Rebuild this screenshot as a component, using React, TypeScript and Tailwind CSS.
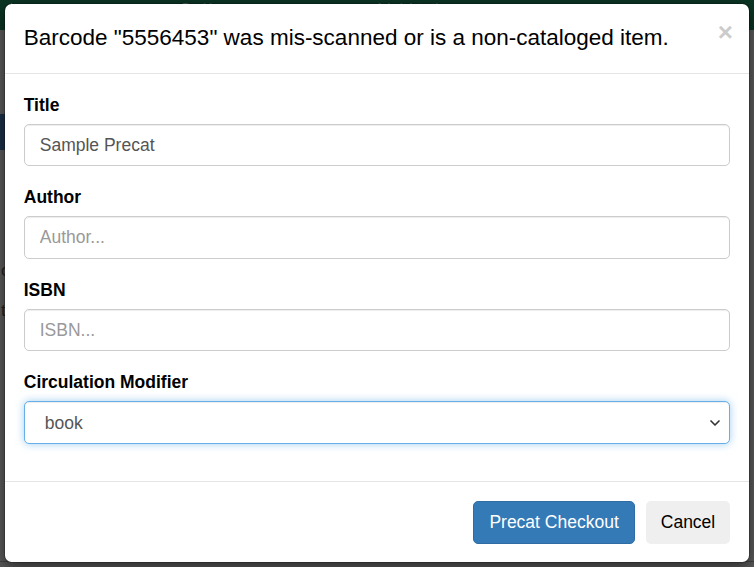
import React from "react";
import { ChevronDown } from "lucide-react";

const font = { fontFamily: '"Liberation Sans", Arial, sans-serif' };

function Field({
  label,
  placeholder,
  value,
}: {
  label: string;
  placeholder: string;
  value?: string;
}) {
  return (
    <div className="mb-[18.75px]">
      <label className="block mb-[6.25px] text-[17.5px] leading-[25px] font-bold text-black">
        {label}
      </label>
      <input
        className="block w-full h-[42.5px] px-[15px] py-[7.5px] text-[17.5px] text-[#555] bg-white border border-[#ccc] rounded-[5px] shadow-[inset_0_1px_1px_rgba(0,0,0,0.075)] outline-none placeholder:text-[#999]"
        placeholder={placeholder}
        defaultValue={value}
      />
    </div>
  );
}

export default function App() {
  return (
    <div className="relative h-[567px] w-[754px] overflow-hidden bg-[#5c5c5c]" style={font}>
      {/* page behind the backdrop */}
      <div className="h-[30px] bg-[#0b3524] flex items-start gap-[150px] px-[10px] pt-[1px] text-[12px] leading-[14px] text-[#55675e]">
        <span>ions</span>
        <span>Booking</span>
        <span>Administration</span>
      </div>
      <div className="h-[36px] w-[12px] mt-[84px] bg-[#1d3149]" />
      <div className="mt-[108px] text-[17px] text-[#222] pl-[1px]">o</div>
      <div className="mt-[14px] text-[17px] text-[#222] pl-[1px]">t</div>
      <div className="absolute left-0 right-0 top-[561px] h-[8px] border-t border-[#444] bg-[#5a5a5a]" />

      {/* modal */}
      <div className="absolute inset-0 flex items-start justify-center pt-[3px]">
        <div className="w-[746px] bg-white border border-[rgba(0,0,0,0.2)] rounded-[7.5px] shadow-[0_5px_15px_rgba(0,0,0,0.5)] bg-clip-padding">
          <div className="flex items-start justify-between pl-[18.75px] pr-[16px] pt-[18px] pb-[18.75px] border-b border-[#e5e5e5]">
            <h4 className="text-[22.5px] leading-[32px] text-black">
              Barcode "5556453" was mis-scanned or is a non-cataloged item.
            </h4>
            <button className="-mt-[6px] text-[26px] leading-[32px] font-bold text-black opacity-20">
              ×
            </button>
          </div>
          <div className="p-[18.75px]">
            <Field label="Title" placeholder="Title..." value="Sample Precat" />
            <Field label="Author" placeholder="Author..." />
            <Field label="ISBN" placeholder="ISBN..." />
            <div className="mb-[18.75px]">
              <label className="block mb-[6.25px] text-[17.5px] leading-[25px] font-bold text-black">
                Circulation Modifier
              </label>
              <div className="relative">
                <select
                  defaultValue="book"
                  className="block w-full h-[42.5px] appearance-none pl-[20px] pr-[40px] py-[7.5px] text-[17.5px] text-[#555] bg-white border border-[#66afe9] rounded-[5px] shadow-[inset_0_1px_1px_rgba(0,0,0,0.075),0_0_8px_rgba(102,175,233,0.6)] outline-none"
                >
                  <option value="book">book</option>
                  <option value="dvd">dvd</option>
                </select>
                <ChevronDown
                  className="pointer-events-none absolute right-[7px] top-1/2 -translate-y-1/2 text-[#333]"
                  size={16}
                  strokeWidth={2.5}
                />
              </div>
            </div>
          </div>
          <div className="flex justify-end gap-[11px] px-[18.75px] py-[18.75px] border-t border-[#e5e5e5]">
            <button className="h-[42.5px] px-[15px] text-[17.5px] text-white bg-[#337ab7] border border-[#2e6da4] rounded-[5px]">
              Precat Checkout
            </button>
            <button className="h-[42.5px] px-[15px] text-[17.5px] text-black bg-[#efefef] rounded-[5px]">
              Cancel
            </button>
          </div>
        </div>
      </div>
    </div>
  );
}
